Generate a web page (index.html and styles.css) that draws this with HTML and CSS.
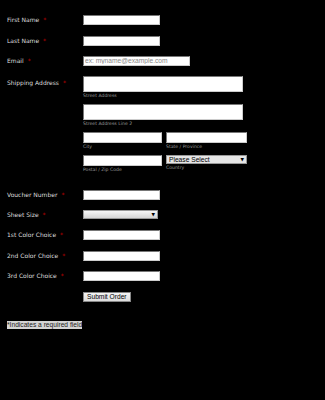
FILE: index.html
```html
<!DOCTYPE html>
<html lang="en">
<head>
    <meta charset="UTF-8">
    <meta name="viewport" content="width=device-width, initial-scale=1.0">
    <title>Order Form</title>
    <link rel="stylesheet" href="styles.css">
</head>
<body>
    <form class="form-all">
        <ul class="form-section">
            <li class="form-line">
                <label class="form-label" for="first_name">First Name<span class="form-required">*</span></label>
                <div class="form-input"><input type="text" id="first_name" class="form-textbox"></div>
            </li>
            <li class="form-line">
                <label class="form-label" for="last_name">Last Name<span class="form-required">*</span></label>
                <div class="form-input"><input type="text" id="last_name" class="form-textbox"></div>
            </li>
            <li class="form-line">
                <label class="form-label" for="email">Email<span class="form-required">*</span></label>
                <div class="form-input"><input type="email" id="email" class="form-textbox wide" placeholder="ex: myname@example.com"></div>
            </li>
            <li class="form-line">
                <label class="form-label top" for="street">Shipping Address<span class="form-required">*</span></label>
                <div class="form-input form-address">
                    <span class="address-full">
                        <input type="text" id="street" class="form-textbox tall">
                        <label class="form-sub-label" for="street">Street Address</label>
                    </span>
                    <span class="address-full">
                        <input type="text" id="street2" class="form-textbox tall">
                        <label class="form-sub-label" for="street2">Street Address Line 2</label>
                    </span>
                    <span>
                        <input type="text" id="city" class="form-textbox city">
                        <label class="form-sub-label" for="city">City</label>
                    </span>
                    <span>
                        <input type="text" id="state" class="form-textbox state">
                        <label class="form-sub-label" for="state">State / Province</label>
                    </span>
                    <span>
                        <input type="text" id="postal" class="form-textbox city">
                        <label class="form-sub-label" for="postal">Postal / Zip Code</label>
                    </span>
                    <span>
                        <span class="form-dropdown-wrap">
                            <select id="country" class="form-dropdown country">
                                <option>Please Select</option>
                            </select>
                        </span>
                        <label class="form-sub-label tight" for="country">Country</label>
                    </span>
                </div>
            </li>
            <li class="form-line">
                <label class="form-label" for="voucher">Voucher Number<span class="form-required">*</span></label>
                <div class="form-input"><input type="text" id="voucher" class="form-textbox"></div>
            </li>
            <li class="form-line">
                <label class="form-label" for="sheet">Sheet Size<span class="form-required">*</span></label>
                <div class="form-input">
                    <span class="form-dropdown-wrap">
                        <select id="sheet" class="form-dropdown">
                            <option></option>
                        </select>
                    </span>
                </div>
            </li>
            <li class="form-line">
                <label class="form-label" for="color1">1st Color Choice<span class="form-required">*</span></label>
                <div class="form-input"><input type="text" id="color1" class="form-textbox"></div>
            </li>
            <li class="form-line">
                <label class="form-label" for="color2">2nd Color Choice<span class="form-required">*</span></label>
                <div class="form-input"><input type="text" id="color2" class="form-textbox"></div>
            </li>
            <li class="form-line">
                <label class="form-label" for="color3">3rd Color Choice<span class="form-required">*</span></label>
                <div class="form-input"><input type="text" id="color3" class="form-textbox"></div>
            </li>
            <li class="form-line">
                <div class="form-label"></div>
                <div class="form-input"><button type="button" class="form-submit-button">Submit Order</button></div>
            </li>
        </ul>
        <div class="form-required-note">*Indicates a required field</div>
    </form>
</body>
</html>
```

FILE: styles.css
```css
html {
    background: #000;
}
body {
    margin: 0;
    padding: 10px 0 0 7px;
    font-family: "Liberation Sans", Arial, sans-serif;
    font-size: 6.67px;
    color: #ddd;
}
.form-section {
    list-style: none;
    margin: 0;
    padding: 0;
}
.form-line {
    display: flex;
    padding: 5.2px 0;
}
.form-label {
    flex: none;
    width: 76px;
    font-family: "DejaVu Sans", Verdana, sans-serif;
    font-size: 6px;
    line-height: 10px;
    color: #ddd;
}
.form-label.top {
    padding-top: 1.5px;
}
.form-required {
    margin-left: 4px;
    color: #c00;
}
.form-textbox {
    box-sizing: border-box;
    display: block;
    width: 77px;
    height: 10px;
    margin: 0;
    padding: 0 1px;
    border: 1px solid;
    border-color: #777 #ccc #ccc #777;
    background: #fff;
    font: 6.67px "Liberation Sans", Arial, sans-serif;
    color: #000;
    outline: none;
}
.form-textbox::placeholder {
    color: #888;
}
.form-textbox.wide {
    width: 107px;
}
.form-textbox.tall {
    width: 160px;
    height: 16px;
}
.form-textbox.city {
    width: 79px;
    height: 11px;
}
.form-textbox.state {
    width: 81px;
    height: 11px;
}
.form-address {
    display: grid;
    grid-template-columns: 79px 81px;
    column-gap: 4px;
    row-gap: 5px;
    margin-bottom: 6px;
}
.address-full {
    grid-column: span 2;
}
.form-sub-label {
    display: block;
    font-family: "DejaVu Sans", Verdana, sans-serif;
    font-size: 4.6px;
    line-height: 7px;
    color: #999;
}
.form-sub-label.tight {
    line-height: 6px;
    margin-top: 1px;
}
.form-dropdown-wrap {
    position: relative;
    display: inline-block;
    vertical-align: top;
}
.form-dropdown {
    -webkit-appearance: none;
    appearance: none;
    box-sizing: border-box;
    display: block;
    width: 75px;
    height: 9px;
    margin: 0;
    padding: 0 2px;
    border: 1px solid #999;
    border-radius: 0;
    background: linear-gradient(#f6f6f6, #d6d6d6);
    font: 6.67px "Liberation Sans", Arial, sans-serif;
    line-height: 7px;
    color: #000;
    outline: none;
}
.form-dropdown.country {
    width: 81px;
    background: #e6e6e6;
}
.form-dropdown-wrap::after {
    content: "\25BC";
    position: absolute;
    right: 3px;
    top: 0;
    font-family: "DejaVu Sans", sans-serif;
    font-size: 4.5px;
    line-height: 9px;
    color: #000;
    pointer-events: none;
}
.form-submit-button {
    box-sizing: border-box;
    height: 10px;
    margin: 0;
    padding: 0 3px;
    border: 1px solid #888;
    border-radius: 0;
    background: linear-gradient(#f4f4f4, #dcdcdc);
    font: 6.67px "Liberation Sans", Arial, sans-serif;
    line-height: 8px;
    color: #000;
    cursor: pointer;
}
.form-required-note {
    display: inline-block;
    margin-top: 14px;
    background: #d4d4d4;
    color: #222;
    line-height: 8px;
}
```
